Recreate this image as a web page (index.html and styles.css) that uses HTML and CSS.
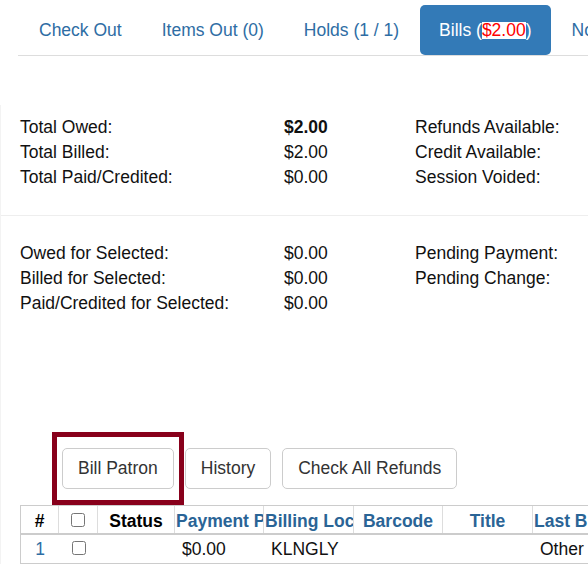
FILE: index.html
```html
<!DOCTYPE html>
<html lang="en">
<head>
    <meta charset="UTF-8">
    <meta name="viewport" content="width=device-width,initial-scale=1.0">
    <title>Patron Bills</title>
    <link rel="stylesheet" href="styles.css">
</head>
<body>
<div class="patron-nav">
    <ul class="tabs">
        <li class="tab"><a href="#">Check Out</a></li>
        <li class="tab"><a href="#">Items Out (0)</a></li>
        <li class="tab"><a href="#">Holds (1 / 1)</a></li>
        <li class="tab active"><a href="#">Bills (<span class="due">$2.00</span>)</a></li>
        <li class="tab"><a href="#">Notes</a></li>
        <li class="tab"><a href="#">Messages</a></li>
    </ul>
</div>

<div class="bills-pane">
    <div class="summary">
        <span>Total Owed:</span><b>$2.00</b><span>Refunds Available:</span>
        <span>Total Billed:</span><span>$2.00</span><span>Credit Available:</span>
        <span>Total Paid/Credited:</span><span>$0.00</span><span>Session Voided:</span>
    </div>
    <div class="summary selected">
        <span>Owed for Selected:</span><span>$0.00</span><span>Pending Payment:</span>
        <span>Billed for Selected:</span><span>$0.00</span><span>Pending Change:</span>
        <span>Paid/Credited for Selected:</span><span>$0.00</span><span></span>
    </div>

    <div class="actions">
        <div class="marked">
            <button type="button" class="btn">Bill Patron</button>
            <span class="mark-box"></span>
        </div>
        <button type="button" class="btn">History</button>
        <button type="button" class="btn">Check All Refunds</button>
    </div>

    <div class="grid-wrap">
        <div class="bill-grid">
            <div class="row head">
                <div class="cell center plain">#</div>
                <div class="cell center"><input type="checkbox"></div>
                <div class="cell center plain">Status</div>
                <div class="cell center">Payment Pending</div>
                <div class="cell center">Billing Location</div>
                <div class="cell center">Barcode</div>
                <div class="cell center">Title</div>
                <div class="cell center">Last Billing Type</div>
            </div>
            <div class="row">
                <div class="cell center"><a href="#">1</a></div>
                <div class="cell center"><input type="checkbox"></div>
                <div class="cell"></div>
                <div class="cell">$0.00</div>
                <div class="cell">KLNGLY</div>
                <div class="cell"></div>
                <div class="cell"></div>
                <div class="cell">Other</div>
            </div>
        </div>
    </div>
</div>
</body>
</html>
```

FILE: styles.css
```css
*{
    margin: 0;
    padding: 0;
    box-sizing: border-box;
}
html, body{
    overflow: hidden;
}
body{
    background: #ffffff;
    font-family: "Liberation Sans", Arial, sans-serif;
    font-size: 17.5px;
    line-height: 25px;
    color: #111111;
}
a{
    color: #2e6da4;
    text-decoration: none;
}

/* top tabs */
.patron-nav{
    padding: 5px 0 0 18px;
}
.tabs{
    display: flex;
    list-style: none;
    padding-left: 2px;
    border-bottom: 1px solid #dddddd;
    overflow: hidden;
    white-space: nowrap;
}
.tab{
    margin-right: 2px;
    flex: none;
}
.tab a{
    display: block;
    padding: 12.5px 19px;
    border-radius: 5px;
}
.tab.active a{
    background: #337ab7;
    color: #ffffff;
}
.tab .due{
    display: inline-block;
    line-height: 17px;
    background: #ffffff;
    color: #ff0000;
}

/* totals */
.bills-pane{
    margin-top: 49px;
    border-left: 1px solid #f3f3f3;
}
.summary{
    display: grid;
    grid-template-columns: 264px 131px 1fr;
    padding: 10px 0 25px 19px;
    border-bottom: 1px solid #eeeeee;
    white-space: nowrap;
}
.summary.selected{
    padding: 25px 0 0 19px;
    border-bottom: none;
}

/* action buttons */
.actions{
    display: flex;
    gap: 11px;
    margin-top: 132px;
    padding-left: 61px;
}
.marked{
    position: relative;
}
.mark-box{
    position: absolute;
    top: -16px;
    bottom: -16px;
    left: -10px;
    right: -10px;
    border: 5px solid #88001b;
    pointer-events: none;
}
.btn{
    display: block;
    padding: 7px 15px;
    border: 1px solid #cccccc;
    border-radius: 5px;
    background: #ffffff;
    color: #333333;
    font: inherit;
    line-height: 25px;
}

/* bills grid */
.grid-wrap{
    margin: 16px 0 0 19px;
    overflow: hidden;
}
.bill-grid{
    width: max-content;
    border-left: 1px solid #cccccc;
}
.row{
    display: grid;
    grid-template-columns: 38px 39px 77px 89px 90px 89px 90px 110px;
    height: 29px;
    border-bottom: 1px solid #cccccc;
}
.row.head{
    height: 30px;
    border-top: 1px solid #cccccc;
    border-bottom: 2px solid #cccccc;
    font-weight: bold;
    color: #2a6496;
}
.row.head .cell{
    border-right: 1px solid #dddddd;
    padding: 3px 1px 0;
}
.row.head .plain{
    color: #000000;
}
.cell{
    overflow: hidden;
    white-space: nowrap;
    padding: 2px 0 0 7px;
}
.cell.center{
    text-align: center;
    padding-left: 0;
}
.cell input{
    width: 14px;
    height: 14px;
    margin: 4px 0 0;
}
.row.head .cell input{
    margin-top: 2px;
}
```
